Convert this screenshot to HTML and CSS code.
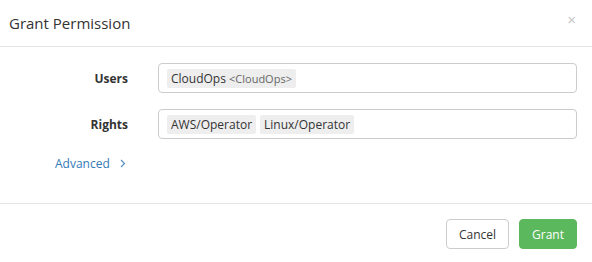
FILE: index.html
```html
<!DOCTYPE html>
<html lang="en">
<head>
  <meta charset="UTF-8" />
  <title>Grant Permission</title>
  <link rel="stylesheet" href="styles.css">
</head>
<body>

  <div class="modal">
    <header class="modal-header">
      <h1>Grant Permission</h1>
      <button class="close" aria-label="Close">&times;</button>
    </header>

    <section class="modal-body">
      <div class="form-row">
        <label>Users</label>
        <div class="tag-input">
          <span class="tag">CloudOps <small>&lt;CloudOps&gt;</small></span>
        </div>
      </div>

      <div class="form-row">
        <label>Rights</label>
        <div class="tag-input">
          <span class="tag">AWS/Operator</span>
          <span class="tag">Linux/Operator</span>
        </div>
      </div>

      <a class="advanced" href="#">Advanced
        <svg width="6" height="9" viewBox="0 0 6 9"><path d="M1 1l3.5 3.5L1 8" fill="none" stroke="currentColor" stroke-width="1.2"/></svg>
      </a>
    </section>

    <footer class="modal-footer">
      <button class="btn">Cancel</button>
      <button class="btn btn-success">Grant</button>
    </footer>
  </div>

</body>
</html>
```

FILE: styles.css
```css
body {
  margin: 0;
  font-family: "Open Sans", Arial, sans-serif;
  font-size: 12px;
  color: #333;
  background-color: #fff;
}

.modal {
  width: 592px;
}

.modal-header {
  height: 46px;
  display: flex;
  align-items: center;
  justify-content: space-between;
  padding: 0 16px 0 9px;
  border-bottom: 1px solid #e5e5e5;
}

.modal-header h1 {
  margin: 0;
  font-size: 15px;
  font-weight: normal;
  color: #333;
}

.close {
  border: none;
  background: none;
  padding: 0;
  font-size: 15px;
  line-height: 1;
  color: #c8c8c8;
  cursor: pointer;
  margin-top: -8px;
}

.modal-body {
  padding: 16px 15px 0 0;
  height: 140px;
}

.form-row {
  display: grid;
  grid-template-columns: 128px 1fr;
  column-gap: 30px;
  align-items: center;
  margin-bottom: 16px;
}

.form-row label {
  text-align: right;
  font-weight: bold;
}

.tag-input {
  height: 30px;
  box-sizing: border-box;
  border: 1px solid #ccc;
  border-radius: 4px;
  padding: 0 8px;
  display: flex;
  align-items: center;
  gap: 4px;
}

.tag {
  background-color: #eee;
  border-radius: 2px;
  padding: 0 4px;
  line-height: 19px;
}

.tag small {
  font-size: 11px;
  color: #666;
}

.advanced {
  display: inline-flex;
  align-items: center;
  gap: 10px;
  margin-left: 55px;
  color: #337ab7;
  text-decoration: none;
}

.advanced svg {
  color: #5a8fbf;
}

.modal-footer {
  border-top: 1px solid #e5e5e5;
  display: flex;
  justify-content: flex-end;
  gap: 10px;
  padding: 15px 15px 13px;
}

.btn {
  height: 30px;
  padding: 0 12px;
  font-family: inherit;
  font-size: 12px;
  color: #333;
  background-color: #fff;
  border: 1px solid #ccc;
  border-radius: 4px;
  cursor: pointer;
}

.btn-success {
  background-color: #5cb85c;
  border-color: #5cb85c;
  color: #fff;
}
```
